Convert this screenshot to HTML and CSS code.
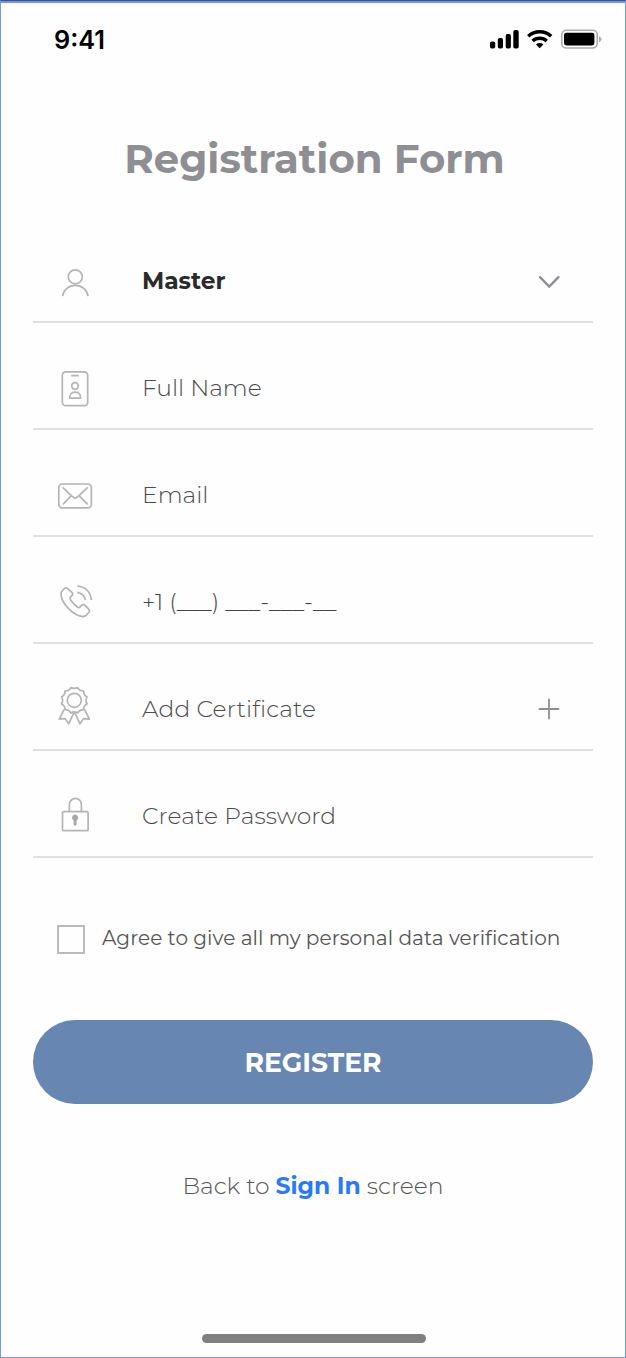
FILE: index.html
```html
<!DOCTYPE html>
<html lang="en">
<head>
<meta charset="utf-8">
<title>Registration Form</title>
<link rel="stylesheet" href="styles.css">
</head>
<body>
<main class="screen">
  <header class="status">
    <span class="time">9:41</span>
    <svg class="status-icons" width="114" height="24" viewBox="0 0 114 24">
      <rect x="2" y="13.5" width="5.2" height="7" rx="1.8"/>
      <rect x="9.8" y="10" width="5.2" height="10.5" rx="1.8"/>
      <rect x="17.7" y="6" width="5.2" height="14.5" rx="1.8"/>
      <rect x="25.3" y="2" width="5.4" height="18.5" rx="1.8"/>
      <g fill="none" stroke="#000" stroke-width="3.4">
        <path d="M40.2 8.2a17 17 0 0 1 23 0"/>
        <path d="M44.6 13a10.5 10.5 0 0 1 14.2 0"/>
      </g>
      <path d="M48 16.4a5.4 5.4 0 0 1 7.4 0L51.7 20.3z"/>
      <rect x="73.8" y="2.2" width="35.4" height="17.8" rx="4.5" fill="none" stroke="#adadad" stroke-width="1.6"/>
      <rect x="76" y="4.7" width="30.4" height="12.8" rx="2.4"/>
      <path d="M111 8.2q2.4 1 2.4 3t-2.4 3z" fill="#adadad"/>
    </svg>
  </header>
  <h1 class="title">Registration Form</h1>
  <form class="fields">
    <div class="field">
      <svg class="icon" viewBox="0 0 44 44"><circle cx="22.3" cy="16.8" r="7"/><path d="M9.6 36.2a12.8 12.4 0 0 1 25.4 0"/></svg>
      <span class="label master">Master</span>
      <svg class="action" viewBox="0 0 24 24"><path d="M3 7.2l9.2 9.3 9.3-9.3" stroke-width="2.4"/></svg>
    </div>
    <div class="field">
      <svg class="icon" viewBox="0 0 44 44"><rect x="9.3" y="4.8" width="25.4" height="33.9" rx="3.4"/><path d="M18.2 8.7h7.6M16.8 31.2v-1c0-6.8 10.8-6.8 10.8 0v1z"/><circle cx="22" cy="19" r="3.3"/></svg>
      <span class="label name">Full Name</span>
    </div>
    <div class="field">
      <svg class="icon" viewBox="0 0 44 44"><rect x="5.8" y="10" width="32.5" height="23.8" rx="3.4"/><path d="M9.7 13.3l8.6 8.4 3.8 2.7 3.9-2.7 8.7-8.4M10 30.3l8.3-8.6M34.7 30.3L26 21.7"/></svg>
      <span class="label email">Email</span>
    </div>
    <div class="field">
      <svg class="icon" viewBox="0 0 44 44"><path d="M10 8.800l1.600-1.400q1.600-1 3 .3l4.300 3.600q1.500 1.400.2 3.100l-1.600 1.700q-1 1.300 0 2.700 3 4.600 7.200 7.400 1.300.8 2.400-.3l1.700-1.700q1.500-1.300 3.100 0l3.800 4q1.400 1.500.2 3l-2.600 3q-1.300 1.400-3.300 1.400C20.500 34.800 9 23 8 13.800q-.3-3.200 2-5zM24.300 5q12.700 1.300 14 14M24.300 11.300q6.700 1.200 8 7.700"/></svg>
      <span class="label phone">+1 (___) ___-___-__</span>
    </div>
    <div class="field">
      <svg class="icon" viewBox="0 0 44 44"><circle cx="21.300" cy="12.300" r="7"/><path d="M17.900-.4Q21.300 1.200 24.700-.4Q26.600 3.100 30.600 3Q30.500 7 34.100 8.900Q31.900 12.300 34.100 15.700Q30.500 17.600 30.600 21.600Q26.600 21.500 24.700 25Q21.300 22.900 17.900 25Q16 21.500 12 21.600Q12.100 17.600 8.500 15.700Q10.700 12.300 8.500 8.900Q12.100 7 12 3Q16 3.100 17.900-.4z"/><path d="M11.200 21.300L6.300 31.200l5.900-.6 3.500 5.200 5.600-12 5.700 12 3.500-5.200 5.900.6-4.900-9.900"/></svg>
      <span class="label cert">Add Certificate</span>
      <svg class="action plus" viewBox="0 0 24 24"><path d="M2.500 12h19M12 2.500v19"/></svg>
    </div>
    <div class="field">
      <svg class="icon" viewBox="0 0 44 44"><rect x="9.500" y="16.700" width="25.600" height="19" rx="1"/><path d="M16.400 16.500V9.300a6 6 0 0 1 12 0v7.200"/><path class="solid" d="M20.600 25.400a3.100 3.100 0 1 1 3 0v4.400q-1.500 2-3 0z"/></svg>
      <span class="label pass">Create Password</span>
    </div>
    <label class="agree"><span class="box"></span><span class="agree-text">Agree to give all my personal data verification</span></label>
    <button class="register" type="button">REGISTER</button>
  </form>
  <p class="back">Back to <a class="signin">Sign In</a> screen</p>
  <div class="home"></div>
</main>
</body>
</html>
```
FILE: styles.css
```css
* { box-sizing: border-box; }
body { margin: 0; background: #fff; font-family: Montserrat, Inter, sans-serif; font-variant-ligatures: none; }
.screen {
  display: flex;
  flex-direction: column;
  height: 1358px;
  padding: 2px 32px 14px;
  border: 1px solid #7398ec;
  border-top-color: #454f78;
  background: linear-gradient(#6f93f0 2px, #fefefe 2px) padding-box;
}
.status { display: flex; justify-content: space-between; align-items: center; height: 48px; margin: 13px -9px 0 21px; }
.time { font: 600 25.300px/30px Inter, sans-serif; }
.status-icons { flex: none; }
.title { margin: 65px 0 27px; text-align: center; font-size: 40.200px; line-height: 60px; font-weight: 700; color: #8e8e93; white-space: nowrap; text-indent: 3px; }
.fields { display: flex; flex-direction: column; }
.field { display: flex; align-items: center; height: 107px; padding: 27px 32px 0 20px; border-bottom: 2px solid #e0e0e0; }
.icon { flex: none; width: 44px; height: 44px; margin-right: 45px; overflow: visible; fill: none; stroke: #b5b5b5; stroke-width: 1.700; stroke-linejoin: round; }
.solid { fill: #a8a8a8; stroke: none; }
.action { width: 24px; height: 24px; margin-left: auto; fill: none; stroke: #8e8e93; stroke-width: 1.800; stroke-linecap: round; }
.plus { margin-top: -2px; }
.label { padding-bottom: 2px; font-size: 23.400px; line-height: 30px; font-weight: 300; color: #4c4c4c; white-space: nowrap; }
.master { font-size: 23.300px; font-weight: 700; color: #2b2b2b; }
.phone { font-size: 23.350px; color: #444; }
.cert { letter-spacing: .14px; }
.pass { letter-spacing: .1px; }
.agree { display: flex; align-items: center; gap: 17px; height: 30px; margin: 66px 0 66px 24px; }
.box { width: 28px; height: 29px; border: 2px solid #bbb; }
.agree-text { padding-bottom: 2px; font-size: 20.100px; line-height: 30px; font-weight: 400; letter-spacing: .03px; color: #555; white-space: nowrap; }
.register { height: 84px; padding: 1px 0 0; border: 0; border-radius: 42px; background: #6786b2; color: #fff; font: 700 26.600px/30px Montserrat, Inter, sans-serif; }
.back { margin: 67px 0 0; text-align: center; font-size: 23.450px; line-height: 30px; font-weight: 300; color: #555; white-space: nowrap; }
.signin { font-weight: 700; color: #2979ff; }
.home { width: 224px; height: 9px; margin: auto 0 0 169px; border-radius: 5px; background: #808080; }
```
